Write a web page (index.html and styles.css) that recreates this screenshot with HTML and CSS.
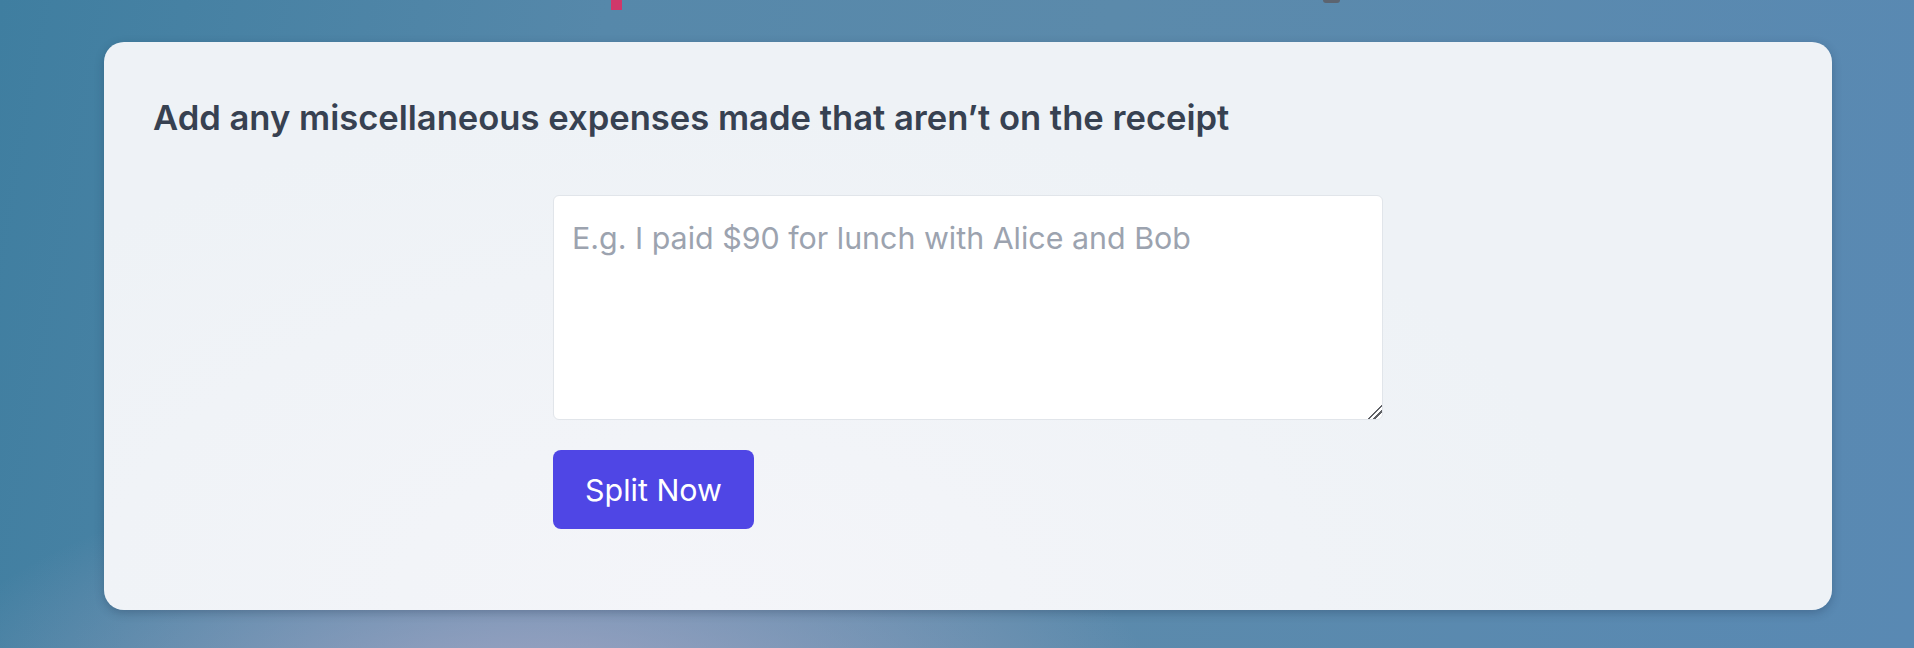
FILE: index.html
```html
<!DOCTYPE html>
<html lang="en">
<head>
<meta charset="utf-8">
<title>Split</title>
<link rel="stylesheet" href="styles.css">
</head>
<body>
<div class="peek peek-pink"></div>
<div class="peek peek-gray"></div>
<main class="page">
  <section class="card">
    <h2 class="card-title">Add any miscellaneous expenses made that aren’t on the receipt</h2>
    <div class="form-col">
      <textarea class="expense-input" placeholder="E.g. I paid $90 for lunch with Alice and Bob"></textarea>
      <button class="split-btn" type="button">Split Now</button>
    </div>
  </section>
</main>
</body>
</html>
```

FILE: styles.css
```css
* { box-sizing: border-box; }
html, body { margin: 0; height: 100%; }
body {
  font-family: Inter, "Noto Sans", sans-serif;
  background:
    radial-gradient(ellipse 620px 240px at 540px 700px, rgba(178, 172, 202, 0.8), rgba(178, 172, 202, 0) 100%),
    linear-gradient(100deg, #3f7ea0 0%, #5688aa 30%, #5b8aab 55%, #5989b3 100%);
  overflow: hidden;
  position: relative;
}
.page {
  padding: 42px 82px 0 104px;
}
.card {
  background: radial-gradient(ellipse 900px 500px at 600px 560px, #f4f5f9, #eef2f6 100%);
  border-radius: 20px;
  box-shadow: 0 3px 10px rgba(20, 40, 70, 0.28);
  height: 568px;
  padding: 55px 49px 0 49px;
}
.card-title {
  margin: 0;
  font-size: 34.6px;
  line-height: 40px;
  font-weight: 600;
  color: #374151;
}
.form-col {
  width: 830px;
  margin: 58px auto 0;
  display: flex;
  flex-direction: column;
  align-items: flex-start;
  gap: 30px;
}
.expense-input {
  width: 830px;
  height: 225px;
  border: 1px solid #e1e5ea;
  border-radius: 6px;
  background: #fff;
  padding: 22px 18px 18px;
  font-family: Inter, "Noto Sans", sans-serif;
  font-size: 30.4px;
  line-height: 40px;
  color: #374151;
  resize: vertical;
  outline: none;
}
.expense-input::placeholder { color: #9ca3af; }
.expense-input::-webkit-resizer {
  background:
    linear-gradient(135deg, transparent 0 52%, #5f6166 52% 60%, transparent 60% 70%, #5f6166 70% 78%, transparent 78%);
}
.split-btn {
  height: 79px;
  width: 201px;
  border: 0;
  border-radius: 8px;
  background: #4f46e5;
  color: #fff;
  font-family: Inter, "Noto Sans", sans-serif;
  font-size: 30.4px;
  line-height: 40px;
  padding: 0;
}
.peek { position: absolute; top: 0; }
.peek-pink {
  left: 611px;
  width: 11px;
  height: 10px;
  background: #d0386a;
}
.peek-gray {
  left: 1323px;
  width: 17px;
  height: 3px;
  border-radius: 0 0 8px 8px;
  background: #5c6470;
}
```
